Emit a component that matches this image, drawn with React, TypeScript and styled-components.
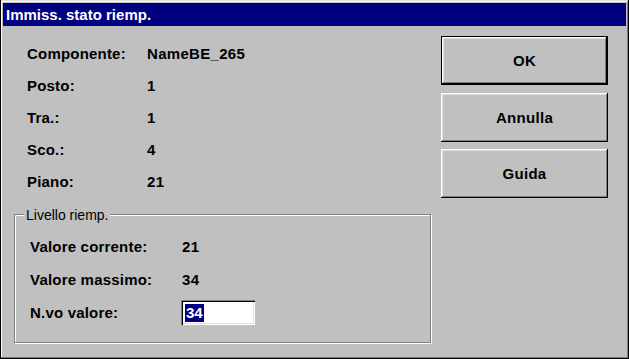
import styled, { createGlobalStyle } from 'styled-components';

const GlobalStyle = createGlobalStyle`
  html, body {
    margin: 0;
    padding: 0;
    background: #c0c0c0;
  }
  body {
    font-family: "Liberation Sans", Arial, sans-serif;
  }
`;

const info = [
  { label: 'Componente:', value: 'NameBE_265' },
  { label: 'Posto:', value: '1' },
  { label: 'Tra.:', value: '1' },
  { label: 'Sco.:', value: '4' },
  { label: 'Piano:', value: '21' },
];

const App = () => {
  return (
    <>
      <GlobalStyle />
      <Window>
        <TitleBar>Immiss. stato riemp.</TitleBar>
        <Body>
          <LeftColumn>
            {info.map((row) => (
              <FieldRow key={row.label}>
                <Label $width={120}>{row.label}</Label>
                <Value>{row.value}</Value>
              </FieldRow>
            ))}
            <GroupBox>
              <Caption>Livello riemp.</Caption>
              <GroupRow>
                <Label $width={152}>Valore corrente:</Label>
                <Value>21</Value>
              </GroupRow>
              <GroupRow>
                <Label $width={152}>Valore massimo:</Label>
                <Value>34</Value>
              </GroupRow>
              <GroupRow>
                <Label $width={151}>N.vo valore:</Label>
                <EditBox>
                  <Selected>34</Selected>
                </EditBox>
              </GroupRow>
            </GroupBox>
          </LeftColumn>
          <ButtonPanel>
            <Button $default>OK</Button>
            <Button>Annulla</Button>
            <Button>Guida</Button>
          </ButtonPanel>
        </Body>
      </Window>
    </>
  );
};

export default App;

const Window = styled.div`
  box-sizing: border-box;
  width: 629px;
  height: 359px;
  padding: 3px;
  background: #c0c0c0;
  box-shadow: inset 1px 0 0 #000, inset -1px -1px 0 #000, inset 0 1px 0 #dfdfdf,
    inset -2px -2px 0 #808080, inset 2px 2px 0 #fff;
`;

const TitleBar = styled.div`
  height: 23px;
  line-height: 23px;
  padding-left: 3px;
  background: #000080;
  color: #fff;
  font-size: 15px;
  font-weight: bold;
  white-space: nowrap;
`;

const Body = styled.div`
  display: flex;
  gap: 10px;
  padding: 10px 0 0 11px;
`;

const LeftColumn = styled.div`
  width: 417px;
  padding-top: 1px;
  display: flex;
  flex-direction: column;
`;

const FieldRow = styled.div`
  display: flex;
  align-items: center;
  height: 32px;
  padding-left: 13px;
`;

const Label = styled.span<{ $width: number }>`
  width: ${(p) => p.$width}px;
  font-size: 15px;
  font-weight: bold;
  letter-spacing: 0.2px;
  color: #000;
  white-space: nowrap;
`;

const Value = styled.span`
  font-size: 15px;
  font-weight: bold;
  letter-spacing: 0.3px;
  color: #000;
`;

const GroupBox = styled.div`
  position: relative;
  box-sizing: border-box;
  margin-top: 17px;
  height: 129px;
  padding: 15px 0 0 15px;
  border: 1px solid #808080;
  box-shadow: 1px 1px 0 #fff, inset 1px 1px 0 #fff;
`;

const Caption = styled.span`
  position: absolute;
  top: -7px;
  left: 9px;
  padding: 0 2px;
  background: #c0c0c0;
  font-size: 14px;
  line-height: 14px;
  color: #000;
`;

const GroupRow = styled.div`
  display: flex;
  align-items: center;
  height: 33px;
`;

const EditBox = styled.div`
  box-sizing: border-box;
  width: 74px;
  height: 25px;
  padding: 4px 0 0 4px;
  background: #fff;
  box-shadow: inset 1px 1px 0 #808080, inset 2px 2px 0 #000, inset -1px -1px 0 #fff,
    inset -2px -2px 0 #dfdfdf;
`;

const Selected = styled.span`
  display: inline-block;
  padding: 0 1px;
  line-height: 18px;
  background: #000080;
  color: #fff;
  font-size: 15px;
  font-weight: bold;
`;

const ButtonPanel = styled.div`
  display: flex;
  flex-direction: column;
  gap: 7.5px;
  width: 167px;
`;

const Button = styled.button<{ $default?: boolean }>`
  width: 167px;
  height: 49px;
  padding: 0;
  border: none;
  background: #c0c0c0;
  color: #000;
  font-family: inherit;
  font-size: 15px;
  font-weight: bold;
  letter-spacing: 0.3px;
  box-shadow: ${(p) =>
    p.$default
      ? 'inset 0 0 0 1px #000, inset -2px -2px 0 #000, inset 2px 2px 0 #fff, inset -3px -3px 0 #808080, inset 3px 3px 0 #dfdfdf'
      : 'inset -1px -1px 0 #000, inset 1px 1px 0 #fff, inset -2px -2px 0 #808080, inset 2px 2px 0 #dfdfdf'};
`;
